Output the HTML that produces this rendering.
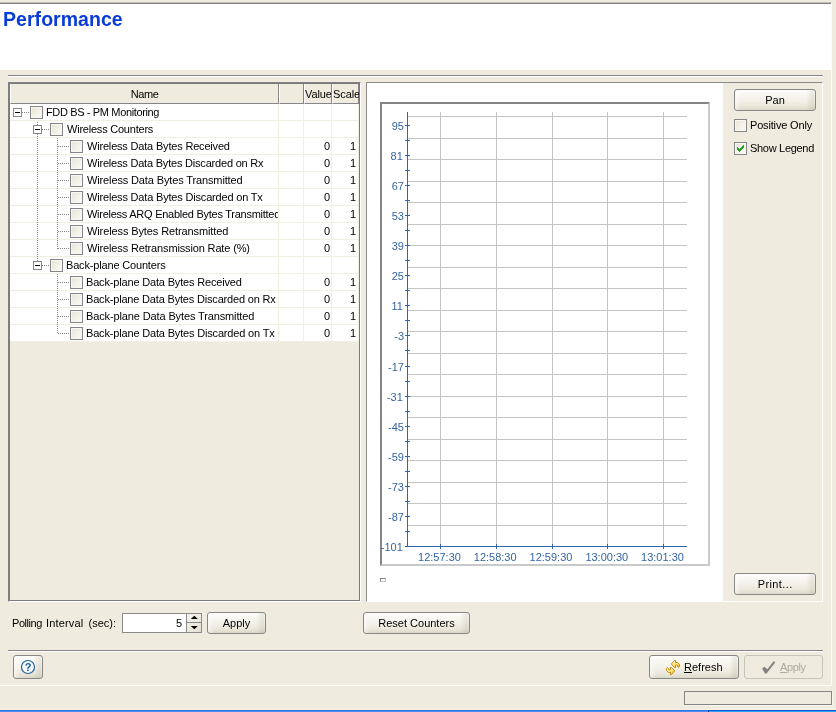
<!DOCTYPE html>
<html><head><meta charset="utf-8"><title>Performance</title>
<style>
*{box-sizing:border-box;margin:0;padding:0}
html,body{width:836px;height:712px;overflow:hidden}
body{background:#EFEBDE;font-family:"Liberation Sans",sans-serif;font-size:11px;color:#000;position:relative}
div,span,i,b{position:absolute;display:block}
.hl{height:1px;background:#868686}
.wl{height:1px;background:#fff}
.title{left:3px;top:7px;font-weight:bold;font-size:19.5px;line-height:24px;color:#0A3CD8;letter-spacing:.05px;white-space:nowrap}
.tbl{left:8px;top:82px;width:353px;height:520px;border:1px solid;border-color:#808080 #fff #fff #808080}
.tin{left:0;top:0;width:351px;height:518px;border:1px solid #7b7b7b;overflow:hidden;background:#EFEBDE}
.tin>.hdr,.tin>.row,.tin>svg{position:absolute}
.hdr{left:0;top:0;width:349px;height:20px;background:#EFEBDE}
.hc{top:0;height:20px;border-right:1px solid #85858a;border-bottom:1px solid #85858a;border-left:1px solid #fff;text-align:center;line-height:21px;white-space:nowrap;overflow:hidden;letter-spacing:-.1px}
.row{left:0;width:349px;height:17px;background:#fff;border-bottom:1px solid #F1EFE2}
.row:before{content:"";position:absolute;left:268px;top:0;width:1px;height:17px;background:#F1EFE2;box-shadow:25px 0 0 #F1EFE2,53px 0 0 #F1EFE2,80px 0 0 #F1EFE2}
.cb{top:2px;width:13px;height:13px;border:1px solid #85858a;background:linear-gradient(135deg,#e8e6da 10%,#f4f1e8 55%,#fcfaf6 100%);box-shadow:inset 0 0 0 1px #f8f7f0}
.ex{top:4px;width:9px;height:9px;border:1px solid #8a8a8a;background:#fff}
.ex:after{content:"";position:absolute;left:1px;top:3px;width:5px;height:1px;background:#000}
.hd{top:8px;height:1px;background-image:linear-gradient(90deg,#858585 50%,transparent 50%);background-size:2px 1px}
.tx{top:0;line-height:17px;white-space:nowrap}
.nc{left:0;top:0;width:268px;height:16px;overflow:hidden}
.v1,.v2{top:0;line-height:17px;text-align:right}
.v1{left:294px;width:26px}
.v2{left:322px;width:24px}
.btn{border:1px solid #878787;border-radius:3px;background:linear-gradient(90deg,rgba(255,255,255,.55) 0,rgba(255,255,255,0) 6px,rgba(160,150,120,0) calc(100% - 9px),rgba(160,150,120,.2) calc(100% - 2px),rgba(160,150,120,.05) 100%),linear-gradient(180deg,#fff 0%,#faf9f4 15%,#f2f0e7 55%,#eae7db 80%,#dcd8ca 100%);text-align:center;line-height:20px;white-space:nowrap}
.chk{width:13px;height:13px;border:1px solid #85858a;background:linear-gradient(135deg,#e8e6da 10%,#f4f1e8 55%,#fcfaf6 100%);box-shadow:inset 0 0 0 1px #f8f7f0}
.lbl{white-space:nowrap;line-height:13px}
.wrap{left:0;top:0;width:836px;height:712px;will-change:transform}

</style></head>
<body>
<div class="wrap">
<div style="left:0;top:2px;width:831px;height:1px;background:#c4c2b8"></div>
<div style="left:0;top:3px;width:831px;height:1px;background:#7f7f7f"></div>
<div style="left:0;top:4px;width:831px;height:66px;background:#fff"></div>
<div class="title">Performance</div>
<div class="hl" style="left:8px;top:75px;width:815px"></div>
<div class="wl" style="left:8px;top:76px;width:815px"></div>
<div style="left:831px;top:3px;width:1px;height:683px;background:#fdfcf8"></div>
<div class="tbl">
<div class="tin">
<div class="hdr"><div class="hc" style="left:0;width:269px;letter-spacing:-.4px">Name</div><div class="hc" style="left:269px;width:25px"></div><div class="hc" style="left:294px;width:28px">Value</div><div class="hc" style="left:322px;width:27px;overflow:visible">Scale</div></div>
<div class="row" style="top:20px"><div class="nc"><i class="ex" style="left:3px"></i><i class="hd" style="left:12px;width:8px"></i><i class="cb" style="left:20px"></i><span class="tx" style="left:36px;letter-spacing:-0.36px">FDD BS - PM Monitoring</span></div></div>
<div class="row" style="top:37px"><div class="nc"><i class="ex" style="left:23px"></i><i class="hd" style="left:32px;width:8px"></i><i class="cb" style="left:40px"></i><span class="tx" style="left:57px;letter-spacing:-0.22px">Wireless Counters</span></div></div>
<div class="row" style="top:54px"><div class="nc"><i class="hd" style="left:48px;width:12px"></i><i class="cb" style="left:60px"></i><span class="tx" style="left:77px;letter-spacing:-0.185px">Wireless Data Bytes Received</span></div><span class="v1">0</span><span class="v2">1</span></div>
<div class="row" style="top:71px"><div class="nc"><i class="hd" style="left:48px;width:12px"></i><i class="cb" style="left:60px"></i><span class="tx" style="left:77px;letter-spacing:-0.2px">Wireless Data Bytes Discarded on Rx</span></div><span class="v1">0</span><span class="v2">1</span></div>
<div class="row" style="top:88px"><div class="nc"><i class="hd" style="left:48px;width:12px"></i><i class="cb" style="left:60px"></i><span class="tx" style="left:77px;letter-spacing:-0.13px">Wireless Data Bytes Transmitted</span></div><span class="v1">0</span><span class="v2">1</span></div>
<div class="row" style="top:105px"><div class="nc"><i class="hd" style="left:48px;width:12px"></i><i class="cb" style="left:60px"></i><span class="tx" style="left:77px;letter-spacing:-0.18px">Wireless Data Bytes Discarded on Tx</span></div><span class="v1">0</span><span class="v2">1</span></div>
<div class="row" style="top:122px"><div class="nc"><i class="hd" style="left:48px;width:12px"></i><i class="cb" style="left:60px"></i><span class="tx" style="left:77px;letter-spacing:-0.26px">Wireless ARQ Enabled Bytes Transmitted</span></div><span class="v1">0</span><span class="v2">1</span></div>
<div class="row" style="top:139px"><div class="nc"><i class="hd" style="left:48px;width:12px"></i><i class="cb" style="left:60px"></i><span class="tx" style="left:77px;letter-spacing:-0.11px">Wireless Bytes Retransmitted</span></div><span class="v1">0</span><span class="v2">1</span></div>
<div class="row" style="top:156px"><div class="nc"><i class="hd" style="left:48px;width:12px"></i><i class="cb" style="left:60px"></i><span class="tx" style="left:77px;letter-spacing:-0.145px">Wireless Retransmission Rate (%)</span></div><span class="v1">0</span><span class="v2">1</span></div>
<div class="row" style="top:173px"><div class="nc"><i class="ex" style="left:23px"></i><i class="hd" style="left:32px;width:8px"></i><i class="cb" style="left:40px"></i><span class="tx" style="left:56px;letter-spacing:-0.17px">Back-plane Counters</span></div></div>
<div class="row" style="top:190px"><div class="nc"><i class="hd" style="left:48px;width:12px"></i><i class="cb" style="left:60px"></i><span class="tx" style="left:76px;letter-spacing:-0.17px">Back-plane Data Bytes Received</span></div><span class="v1">0</span><span class="v2">1</span></div>
<div class="row" style="top:207px"><div class="nc"><i class="hd" style="left:48px;width:12px"></i><i class="cb" style="left:60px"></i><span class="tx" style="left:76px;letter-spacing:-0.18px">Back-plane Data Bytes Discarded on Rx</span></div><span class="v1">0</span><span class="v2">1</span></div>
<div class="row" style="top:224px"><div class="nc"><i class="hd" style="left:48px;width:12px"></i><i class="cb" style="left:60px"></i><span class="tx" style="left:76px;letter-spacing:-0.125px">Back-plane Data Bytes Transmitted</span></div><span class="v1">0</span><span class="v2">1</span></div>
<div class="row" style="top:241px"><div class="nc"><i class="hd" style="left:48px;width:12px"></i><i class="cb" style="left:60px"></i><span class="tx" style="left:76px;letter-spacing:-0.17px">Back-plane Data Bytes Discarded on Tx</span></div><span class="v1">0</span><span class="v2">1</span></div>
<svg width="349" height="260" style="left:0;top:0" shape-rendering="crispEdges">
<g stroke="#858585" stroke-width="1" stroke-dasharray="1 1" fill="none">
<path d="M27.5 38v3"/><path d="M27.5 50v127"/>
<path d="M47.5 54v111"/><path d="M47.5 190v60"/>
</g>
</svg>
</div>
</div>
<div style="left:366px;top:82px;width:457px;height:520px;border:1px solid;border-color:#8a8a8a #fff #fff #8a8a8a;background:#EFEBDE">
<div style="left:0;top:0;width:356px;height:518px;background:#fff"></div>
</div>
<div style="left:380px;top:102px;width:330px;height:464px;border:2px solid;border-color:#858585 #c9c9c9 #c9c9c9 #858585;background:#fff"></div>
<svg width="350" height="500" viewBox="0 0 350 500" style="position:absolute;left:370px;top:95px;font-family:'Liberation Sans',sans-serif;font-size:11px" fill="#3465A4">
<g stroke="#c4c4c4" stroke-width="1" shape-rendering="crispEdges">
<line x1="38" y1="21.5" x2="317" y2="21.5"/><line x1="38" y1="43.5" x2="317" y2="43.5"/><line x1="38" y1="64.5" x2="317" y2="64.5"/><line x1="38" y1="86.5" x2="317" y2="86.5"/><line x1="38" y1="107.5" x2="317" y2="107.5"/><line x1="38" y1="129.5" x2="317" y2="129.5"/><line x1="38" y1="150.5" x2="317" y2="150.5"/><line x1="38" y1="172.5" x2="317" y2="172.5"/><line x1="38" y1="193.5" x2="317" y2="193.5"/><line x1="38" y1="215.5" x2="317" y2="215.5"/><line x1="38" y1="236.5" x2="317" y2="236.5"/><line x1="38" y1="258.5" x2="317" y2="258.5"/><line x1="38" y1="279.5" x2="317" y2="279.5"/><line x1="38" y1="301.5" x2="317" y2="301.5"/><line x1="38" y1="322.5" x2="317" y2="322.5"/><line x1="38" y1="344.5" x2="317" y2="344.5"/><line x1="38" y1="365.5" x2="317" y2="365.5"/><line x1="38" y1="387.5" x2="317" y2="387.5"/><line x1="38" y1="408.5" x2="317" y2="408.5"/><line x1="38" y1="430.5" x2="317" y2="430.5"/><line x1="70.5" y1="17" x2="70.5" y2="451"/><line x1="126.5" y1="17" x2="126.5" y2="451"/><line x1="182.5" y1="17" x2="182.5" y2="451"/><line x1="237.5" y1="17" x2="237.5" y2="451"/><line x1="293.5" y1="17" x2="293.5" y2="451"/></g>
<g stroke="#3465A4" stroke-width="1" shape-rendering="crispEdges">
<line x1="37.5" y1="17" x2="37.5" y2="452"/><line x1="35" y1="451.5" x2="317" y2="451.5"/><line x1="35" y1="30.5" x2="40" y2="30.5"/><line x1="35" y1="45.5" x2="40" y2="45.5"/><line x1="35" y1="60.5" x2="40" y2="60.5"/><line x1="35" y1="75.5" x2="40" y2="75.5"/><line x1="35" y1="90.5" x2="40" y2="90.5"/><line x1="35" y1="105.5" x2="40" y2="105.5"/><line x1="35" y1="120.5" x2="40" y2="120.5"/><line x1="35" y1="135.5" x2="40" y2="135.5"/><line x1="35" y1="150.5" x2="40" y2="150.5"/><line x1="35" y1="165.5" x2="40" y2="165.5"/><line x1="35" y1="180.5" x2="40" y2="180.5"/><line x1="35" y1="195.5" x2="40" y2="195.5"/><line x1="35" y1="210.5" x2="40" y2="210.5"/><line x1="35" y1="225.5" x2="40" y2="225.5"/><line x1="35" y1="240.5" x2="40" y2="240.5"/><line x1="35" y1="255.5" x2="40" y2="255.5"/><line x1="35" y1="271.5" x2="40" y2="271.5"/><line x1="35" y1="286.5" x2="40" y2="286.5"/><line x1="35" y1="301.5" x2="40" y2="301.5"/><line x1="35" y1="316.5" x2="40" y2="316.5"/><line x1="35" y1="331.5" x2="40" y2="331.5"/><line x1="35" y1="346.5" x2="40" y2="346.5"/><line x1="35" y1="361.5" x2="40" y2="361.5"/><line x1="35" y1="376.5" x2="40" y2="376.5"/><line x1="35" y1="391.5" x2="40" y2="391.5"/><line x1="35" y1="406.5" x2="40" y2="406.5"/><line x1="35" y1="421.5" x2="40" y2="421.5"/><line x1="35" y1="436.5" x2="40" y2="436.5"/><line x1="70.5" y1="449" x2="70.5" y2="454"/><line x1="126.5" y1="449" x2="126.5" y2="454"/><line x1="182.5" y1="449" x2="182.5" y2="454"/><line x1="237.5" y1="449" x2="237.5" y2="454"/><line x1="293.5" y1="449" x2="293.5" y2="454"/></g>
<g text-anchor="end"><text x="34.0" y="35">95</text><text x="32.8" y="65">81</text><text x="34.0" y="95">67</text><text x="34.0" y="125">53</text><text x="34.0" y="155">39</text><text x="34.0" y="185">25</text><text x="32.8" y="215">11</text><text x="34.0" y="245">-3</text><text x="34.0" y="276">-17</text><text x="32.8" y="306">-31</text><text x="34.0" y="336">-45</text><text x="34.0" y="366">-59</text><text x="34.0" y="396">-73</text><text x="34.0" y="426">-87</text><text x="32.8" y="456">-101</text></g>
<g text-anchor="middle"><text x="69.5" y="466">12:57:30</text><text x="125.2" y="466">12:58:30</text><text x="181.0" y="466">12:59:30</text><text x="236.8" y="466">13:00:30</text><text x="292.5" y="466">13:01:30</text></g>
</svg>
<div style="left:380px;top:578px;width:6px;height:4px;border:1px solid;border-color:#858585 #c4c4c4 #c4c4c4 #858585;background:#fff"></div>
<div class="btn" style="left:734px;top:89px;width:82px;height:22px">Pan</div>
<div class="chk" style="left:734px;top:119px"></div><div class="lbl" style="left:750px;top:119px;letter-spacing:-.17px">Positive Only</div>
<div class="chk" style="left:734px;top:142px"><svg width="11" height="11" viewBox="0 0 11 11" style="position:absolute;left:0;top:0" shape-rendering="crispEdges"><path d="M2 4h1v1h1v1h1v-1h1v-1h1v-1h1v-1h1v3h-1v1h-1v1h-1v1h-1v1h-1v-1h-1v-1h-1z" fill="#21A121"/></svg></div><div class="lbl" style="left:750px;top:142px;letter-spacing:-.3px">Show Legend</div>
<div class="btn" style="left:734px;top:573px;width:82px;height:22px;letter-spacing:.4px;text-indent:.4px">Print...</div>
<div class="lbl" style="left:12px;top:617px"><span style="position:static;display:inline;letter-spacing:-.45px">Polling</span> <span style="position:static;display:inline;letter-spacing:.18px;margin-left:1px">Interval</span> <span style="position:static;display:inline;margin-left:2px">(sec):</span></div>
<div style="left:122px;top:613px;width:80px;height:20px;border:1px solid #8a8a8a;background:#fff">
<span style="right:19px;top:0;line-height:18px">5</span>
<div style="left:63px;top:0;width:15px;height:18px;border-left:1px solid #8a8a8a;background:linear-gradient(135deg,#f6f4ec,#e4e0d2)"></div>
<div style="left:64px;top:8px;width:14px;height:1px;background:#8a8a8a"></div>
<svg width="14" height="18" style="position:absolute;left:64px;top:0"><path d="M3.8 5.1h7l-3.5-3.3z M3.8 11.9h7l-3.5 3.3z" fill="#000"/></svg>
</div>
<div class="btn" style="left:207px;top:612px;width:59px;height:22px">Apply</div>
<div class="btn" style="left:363px;top:612px;width:107px;height:22px">Reset Counters</div>
<div class="hl" style="left:8px;top:650px;width:815px"></div>
<div class="wl" style="left:8px;top:651px;width:815px"></div>
<div class="btn" style="left:13px;top:655px;width:30px;height:24px"><svg width="16" height="16" viewBox="0 0 16 16" style="position:absolute;left:6px;top:3px"><circle cx="8" cy="8" r="6.5" fill="#f6faff" stroke="#22629e" stroke-width="1.2"/><text x="8" y="12" text-anchor="middle" font-family="Liberation Sans, sans-serif" font-weight="bold" font-size="11" fill="#1c5a9a">?</text></svg></div>
<div class="btn" style="left:649px;top:655px;width:90px;height:24px;line-height:22px"><svg width="18" height="18" viewBox="0 0 18 18" style="position:absolute;left:14px;top:2px"><defs><linearGradient id="rg" x1="0" y1="0" x2=".6" y2="1"><stop offset="0" stop-color="#FFFFF0"/><stop offset=".5" stop-color="#FFEA88"/><stop offset="1" stop-color="#FAC030"/></linearGradient><linearGradient id="rg2" x1="1" y1="1" x2=".4" y2="0"><stop offset="0" stop-color="#FFFFF0"/><stop offset=".5" stop-color="#FFEA88"/><stop offset="1" stop-color="#FAC030"/></linearGradient></defs><path d="M7.5 6L8.5 4.5L10.5 2.5L11.5 2.5L11.5 4.5L13.5 4.5L15.5 6.5L15.5 8.5L14.5 9.5L13.5 8.5L13.5 7.5L12.5 7L11.5 7.5L11.5 9.5L10.5 9.5L8.5 7.5Z" fill="url(#rg)" stroke="#C68A08" stroke-width="1" stroke-linejoin="round"/><path d="M7.5 6L8.5 4.5L10.5 2.5L11.5 2.5L11.5 4.5L13.5 4.5L15.5 6.5L15.5 8.5L14.5 9.5L13.5 8.5L13.5 7.5L12.5 7L11.5 7.5L11.5 9.5L10.5 9.5L8.5 7.5Z" fill="url(#rg2)" stroke="#C68A08" stroke-width="1" stroke-linejoin="round" transform="rotate(180 9 9.5)"/></svg><span style="left:34px;top:0;line-height:22px"><u>R</u>efresh</span></div>
<div class="btn" style="left:744px;top:655px;width:79px;height:24px;line-height:22px;border-color:#c6c5b8;background:#EFEBDE;box-shadow:none;color:#aeab9d"><svg width="40" height="22" viewBox="0 0 40 22" style="position:absolute;left:0;top:0"><path d="M17.1 12.4L19.5 10.7L22.4 13.2L28.8 5.1L30.2 6.4L21.4 17.8L20 17.5Z" fill="#828282"/></svg><span style="left:35px;top:0;line-height:22px;letter-spacing:-.37px"><u>A</u>pply</span></div>
<div class="wl" style="left:0;top:685px;width:832px;background:#fdfcf8"></div>
<div style="left:684px;top:691px;width:148px;height:14px;border:1px solid #858585;background:#EFEBDE;box-shadow:1px 1px 0 #f8f6ee"></div>
<div style="left:0;top:709px;width:836px;height:1px;background:#faf3e2"></div>
<div style="left:0;top:710px;width:708px;height:1px;background:#3273E4"></div>
<div style="left:0;top:711px;width:708px;height:1px;background:#4A8CF0"></div>
<div style="left:708px;top:710px;width:128px;height:1px;background:#0C55D2"></div>
<div style="left:708px;top:711px;width:128px;height:1px;background:#2AA5F5"></div>
<div style="left:708px;top:711px;width:1px;height:1px;background:#1a3a80"></div>
</div>
</body></html>
